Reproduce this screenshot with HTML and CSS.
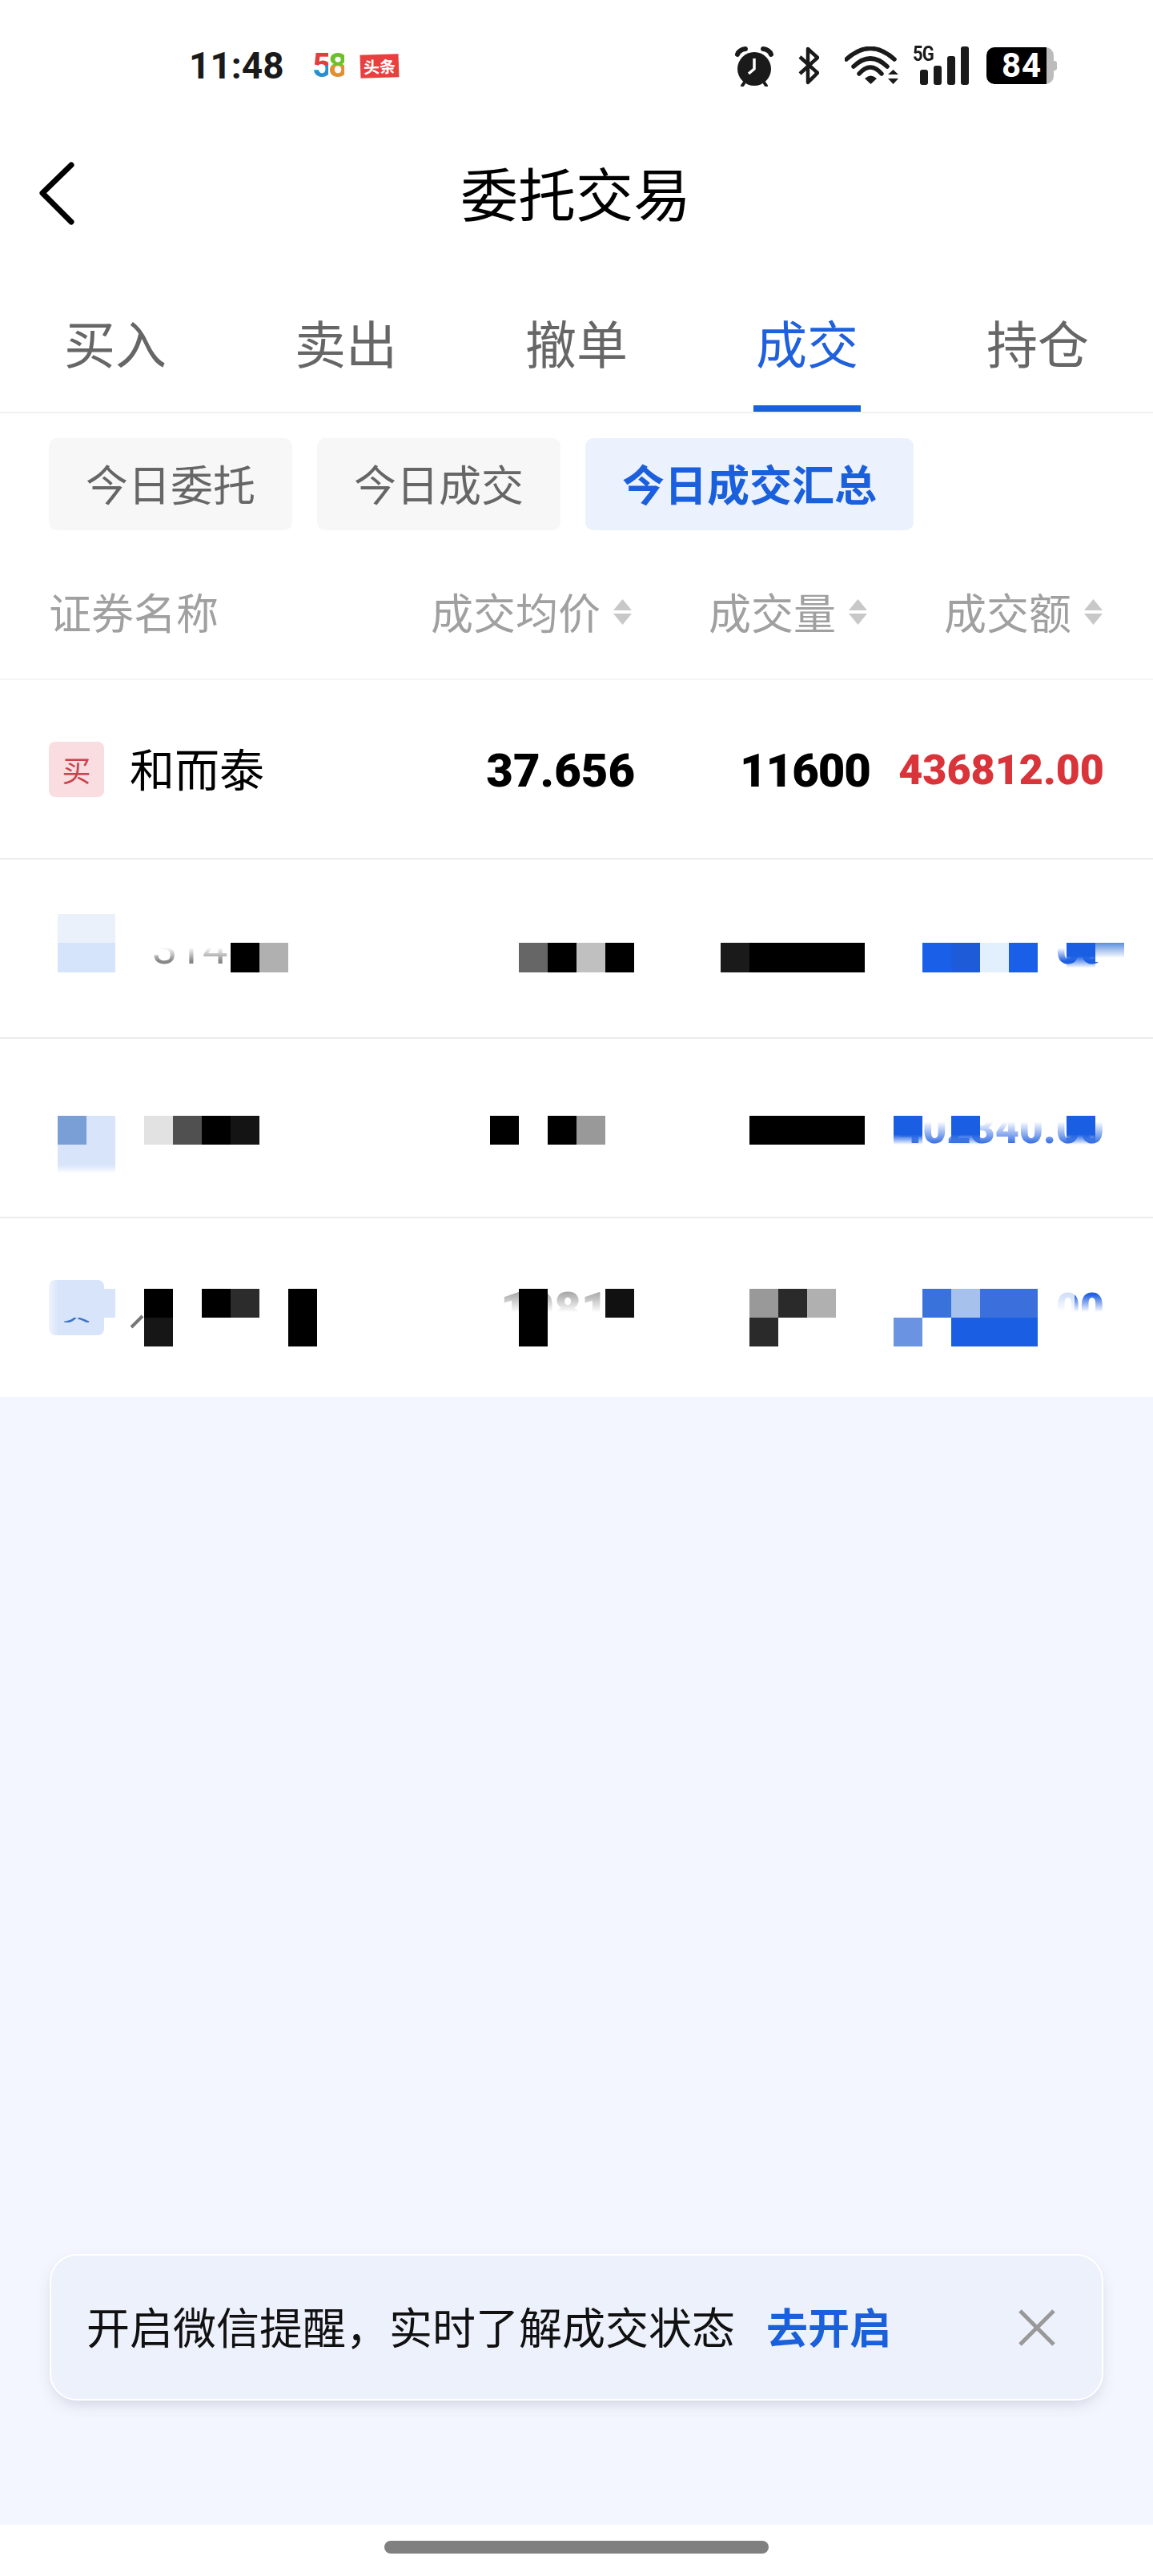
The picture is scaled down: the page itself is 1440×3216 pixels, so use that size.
FILE: index.html
```html
<!DOCTYPE html>
<html lang="zh-CN">
<head>
    <meta charset="UTF-8">
    <meta name="viewport" content="width=device-width, initial-scale=1.0">
    <title>委托交易</title>
    <link rel="stylesheet" href="styles.css">
</head>
<body>
<div class="page">
    <div class="status-bar">
        <div class="status-left">
            <span class="time">11:48</span>
            <span class="logo-58"><span class="five">5</span><span class="eight">8</span></span>
            <span class="logo-news">头条</span>
        </div>
        <div class="status-right">
            <svg class="icon-alarm" width="50" height="52" viewBox="0 0 50 52">
                <circle cx="24" cy="30" r="21" fill="#1a1a1a"/>
                <path d="M3 12Q5 6 13 5M45 12Q43 6 35 5" fill="none" stroke="#1a1a1a" stroke-width="6" stroke-linecap="round"/>
                <path d="M13 45L9 51M35 45L39 51" fill="none" stroke="#1a1a1a" stroke-width="4" stroke-linecap="round"/>
                <path d="M24 17V30L17 36" fill="none" stroke="#fff" stroke-width="3.5"/>
            </svg>
            <svg class="icon-bt" width="26" height="48" viewBox="0 0 26 48">
                <path d="M2 13L24 33L12 45V3L24 14L2 34" fill="none" stroke="#1a1a1a" stroke-width="4.5" stroke-linejoin="round"/>
            </svg>
            <svg class="icon-wifi" width="68" height="48" viewBox="0 0 68 48">
                <path d="M2 16Q32 -11 62 16M11 25Q32 5 53 25M18 34Q32 18 46 34" fill="none" stroke="#1a1a1a" stroke-width="5.5" stroke-linecap="round"/>
                <path d="M25 40Q32.5 33 40 40L32.5 47Z" fill="#1a1a1a"/>
                <path d="M60.5 29L67 35H54ZM54 40H67L60.5 47Z" fill="#1a1a1a"/>
            </svg>
            <div class="signal">
                <span class="signal-type">5G</span>
                <svg width="61" height="48" viewBox="0 0 61 48">
                    <g fill="#1a1a1a">
                        <rect x="0" y="29" width="10" height="19" rx="3"/>
                        <rect x="17" y="24" width="10" height="24" rx="3"/>
                        <rect x="34" y="12" width="10" height="36" rx="3"/>
                        <rect x="51" y="0" width="10" height="48" rx="3"/>
                    </g>
                </svg>
            </div>
            <div class="battery">
                <span class="battery-level">84</span>
                <span class="battery-tip"></span>
            </div>
        </div>
    </div>

    <header class="nav">
        <svg class="back" width="50" height="84" viewBox="0 0 50 84">
            <path d="M42 7L6 42L42 78" fill="none" stroke="#000" stroke-width="7" stroke-linecap="round" stroke-linejoin="round"/>
        </svg>
        <h1>委托交易</h1>
    </header>

    <nav class="tabs">
        <div class="tab">买入</div>
        <div class="tab">卖出</div>
        <div class="tab">撤单</div>
        <div class="tab active">成交</div>
        <div class="tab">持仓</div>
    </nav>

    <div class="filters">
        <div class="filter">今日委托</div>
        <div class="filter">今日成交</div>
        <div class="filter active">今日成交汇总</div>
    </div>

    <div class="table-head">
        <div class="col-name">证券名称</div>
        <div class="col-num">成交均价<svg class="sort" width="23" height="32" viewBox="0 0 23 32"><path d="M11.500 0L23 14H0ZM0 18H23L11.500 32Z" fill="#c8c8c8"/></svg></div>
        <div class="col-num">成交量<svg class="sort" width="23" height="32" viewBox="0 0 23 32"><path d="M11.500 0L23 14H0ZM0 18H23L11.500 32Z" fill="#c8c8c8"/></svg></div>
        <div class="col-num">成交额<svg class="sort" width="23" height="32" viewBox="0 0 23 32"><path d="M11.500 0L23 14H0ZM0 18H23L11.500 32Z" fill="#c8c8c8"/></svg></div>
    </div>

    <div class="row">
        <div class="cell-name"><span class="badge">买</span><span class="stock">和而泰</span></div>
        <div class="num">37.656</div>
        <div class="num tight">11600</div>
        <div class="amount up">436812.00</div>
    </div>

    <!-- rows below are pixelated in the source picture -->
    <div class="row">
        <div class="cell-name"><span class="ghost-code fade-top">3147</span></div>
        <div class="num"></div>
        <div class="num"></div>
        <div class="amount down fade-top">00</div>
        <svg class="mosaic" viewBox="0 0 1440 224">
            <defs>
                <linearGradient id="fadeA" x1="0" y1="0" x2="0" y2="1">
                    <stop offset="0.45" stop-color="#1a5fe3"/>
                    <stop offset="0.85" stop-color="#1a5fe3" stop-opacity="0"/>
                </linearGradient>
                <linearGradient id="fadeB" x1="0" y1="0" x2="0" y2="1">
                    <stop offset="0" stop-color="#5b8fe0"/>
                    <stop offset="0.8" stop-color="#ffffff"/>
                </linearGradient>
            </defs>
            <rect x="72" y="68" width="72" height="36" fill="#eaf1fb"/>
            <rect x="72" y="104" width="72" height="37" fill="#d5e4fb"/>
            <rect x="288" y="104" width="36" height="37" fill="#000"/>
            <rect x="324" y="104" width="36" height="37" fill="#b0b0b0"/>
            <rect x="648" y="104" width="36" height="37" fill="#666"/>
            <rect x="684" y="104" width="36" height="37" fill="#000"/>
            <rect x="720" y="104" width="36" height="37" fill="#c0c0c0"/>
            <rect x="756" y="104" width="36" height="37" fill="#000"/>
            <rect x="900" y="104" width="36" height="37" fill="#1a1a1a"/>
            <rect x="936" y="104" width="144" height="37" fill="#000"/>
            <rect x="1152" y="104" width="36" height="37" fill="#1a5fe8"/>
            <rect x="1188" y="104" width="36" height="37" fill="#1d5bd8"/>
            <rect x="1224" y="104" width="36" height="37" fill="#e2effd"/>
            <rect x="1260" y="104" width="36" height="37" fill="#1a5fe8"/>
            <rect x="1332" y="104" width="36" height="37" fill="url(#fadeA)"/>
            <rect x="1368" y="104" width="36" height="24" fill="url(#fadeB)"/>
        </svg>
    </div>

    <div class="row">
        <div class="cell-name"></div>
        <div class="num"></div>
        <div class="num"></div>
        <div class="amount down fade-top-soft">402340.00</div>
        <svg class="mosaic" viewBox="0 0 1440 224">
            <defs>
                <linearGradient id="fadeC" x1="0" y1="0" x2="0" y2="1">
                    <stop offset="0.7" stop-color="#d8e4fa"/>
                    <stop offset="1" stop-color="#ffffff"/>
                </linearGradient>
                <linearGradient id="fadeD" x1="0" y1="0" x2="0" y2="1">
                    <stop offset="0.65" stop-color="#1a5fe3"/>
                    <stop offset="1" stop-color="#1a5fe3" stop-opacity="0"/>
                </linearGradient>
            </defs>
            <rect x="72" y="96" width="36" height="36" fill="#7a9fd6"/>
            <rect x="108" y="96" width="36" height="36" fill="#d8e4fa"/>
            <rect x="72" y="132" width="72" height="36" fill="url(#fadeC)"/>
            <rect x="180" y="96" width="36" height="36" fill="#e2e2e2"/>
            <rect x="216" y="96" width="36" height="36" fill="#505050"/>
            <rect x="252" y="96" width="36" height="36" fill="#000"/>
            <rect x="288" y="96" width="36" height="36" fill="#141414"/>
            <rect x="612" y="96" width="36" height="36" fill="#000"/>
            <rect x="684" y="96" width="36" height="36" fill="#000"/>
            <rect x="720" y="96" width="36" height="36" fill="#999"/>
            <rect x="936" y="96" width="144" height="36" fill="#000"/>
            <rect x="1116" y="96" width="36" height="36" fill="url(#fadeD)"/>
            <rect x="1188" y="96" width="36" height="36" fill="url(#fadeD)"/>
            <rect x="1332" y="96" width="36" height="36" fill="url(#fadeD)"/>
        </svg>
    </div>

    <div class="row last">
        <div class="cell-name"><span class="badge sell"><span class="fade-top">卖</span></span></div>
        <div class="num ghost-num fade-bottom">10810</div>
        <div class="num"></div>
        <div class="amount down fade-bottom">00</div>
        <svg class="mosaic" viewBox="0 0 1440 224">
            <path d="M164 136L178 122" stroke="#777" stroke-width="4" fill="none"/>
            <rect x="72" y="88" width="72" height="36" fill="#d8e4fa"/>
            <rect x="180" y="88" width="36" height="36" fill="#000"/>
            <rect x="180" y="124" width="36" height="36" fill="#161616"/>
            <rect x="252" y="88" width="36" height="36" fill="#000"/>
            <rect x="288" y="88" width="36" height="36" fill="#2c2c2c"/>
            <rect x="360" y="88" width="36" height="72" fill="#000"/>
            <rect x="648" y="88" width="36" height="72" fill="#000"/>
            <rect x="756" y="88" width="36" height="36" fill="#111"/>
            <rect x="936" y="88" width="36" height="36" fill="#999"/>
            <rect x="972" y="88" width="36" height="36" fill="#2a2a2a"/>
            <rect x="1008" y="88" width="36" height="36" fill="#b0b0b0"/>
            <rect x="936" y="124" width="36" height="36" fill="#2a2a2a"/>
            <rect x="1152" y="88" width="36" height="36" fill="#3a72dc"/>
            <rect x="1188" y="88" width="36" height="36" fill="#a6c2ec"/>
            <rect x="1224" y="88" width="72" height="36" fill="#3a6fdc"/>
            <rect x="1116" y="124" width="36" height="36" fill="#6a94e2"/>
            <rect x="1188" y="124" width="108" height="36" fill="#1a5fe3"/>
            <rect x="1296" y="88" width="46" height="72" fill="#fff" opacity="0.8"/>
        </svg>
    </div>

    <div class="empty">
        <div class="toast">
            <span class="toast-text">开启微信提醒，实时了解成交状态</span>
            <span class="toast-link">去开启</span>
            <svg class="toast-close" width="46" height="46" viewBox="0 0 46 46">
                <path d="M2 2L44 44M44 2L2 44" stroke="#999" stroke-width="5" fill="none"/>
            </svg>
        </div>
    </div>

    <div class="home-area">
        <div class="home-bar"></div>
    </div>
</div>
</body>
</html>
```

FILE: styles.css
```css
body {
    margin: 0;
    padding: 0;
    background-color: #fff;
    font-family: "Noto Sans CJK SC", "Liberation Sans", sans-serif;
    color: #000;
}

.page {
    width: 1440px;
    height: 3216px;
    display: flex;
    flex-direction: column;
    overflow: hidden;
}

/* status bar */
.status-bar {
    height: 164px;
    flex: none;
    display: flex;
    justify-content: space-between;
    align-items: center;
    padding: 0 124px 0 236px;
}

.status-left,
.status-right {
    display: flex;
    align-items: center;
}

.time {
    font-family: Roboto, sans-serif;
    font-weight: 700;
    font-size: 46px;
    line-height: 1;
    color: #1a1a1a;
    width: 154px;
}

.logo-58 {
    font-family: Roboto, sans-serif;
    font-weight: 700;
    font-size: 42px;
    line-height: 1;
    letter-spacing: -4px;
    width: 60px;
}

.logo-58 span {
    -webkit-background-clip: text;
    background-clip: text;
    color: transparent;
}

.logo-58 .five {
    background-image: linear-gradient(#e0403a 50%, #2a8fd0 50%);
}

.logo-58 .eight {
    background-image: linear-gradient(#6cc02a 50%, #e09030 50%);
}

.logo-news {
    width: 48px;
    height: 29px;
    background-color: #e8403f;
    color: #fff;
    font-size: 20px;
    font-weight: 700;
    line-height: 29px;
    text-align: center;
    transform: rotate(-2deg);
}

.icon-alarm {
    margin-right: 29px;
}

.icon-bt {
    margin-right: 32px;
}

.icon-wifi {
    margin-right: 26px;
}

.signal {
    position: relative;
    width: 61px;
    height: 48px;
    margin-right: 22px;
}

.signal svg {
    display: block;
}

.signal-type {
    position: absolute;
    top: -4px;
    left: -9px;
    font-family: Roboto, sans-serif;
    font-weight: 700;
    font-size: 26px;
    line-height: 1;
    letter-spacing: -1px;
    color: #1a1a1a;
    transform: scaleX(0.85);
    transform-origin: left top;
}

.battery {
    position: relative;
    width: 84px;
    height: 46px;
    border-radius: 10px;
    background: linear-gradient(90deg, #000 89%, #bcbcbc 89%);
}

.battery-level {
    display: block;
    padding-left: 19px;
    font-family: Roboto, sans-serif;
    font-weight: 700;
    font-size: 42px;
    line-height: 46px;
    letter-spacing: 1px;
    color: #fff;
}

.battery-tip {
    position: absolute;
    top: 17px;
    right: -4px;
    width: 4px;
    height: 12px;
    border-radius: 0 3px 3px 0;
    background-color: #bcbcbc;
}

/* title */
.nav {
    position: relative;
    height: 150px;
    padding: 0 2px 8px 0;
    flex: none;
    display: flex;
    justify-content: center;
    align-items: center;
}

.nav h1 {
    margin: 0;
    font-size: 72px;
    font-weight: 400;
    line-height: 1;
    color: #000;
}

.back {
    position: absolute;
    left: 47px;
    top: 35px;
}

/* tabs */
.tabs {
    display: grid;
    grid-template-columns: repeat(5, 1fr);
    height: 192px;
    flex: none;
    border-bottom: 2px solid #f0f0f0;
}

.tab {
    position: relative;
    display: flex;
    justify-content: center;
    padding-top: 72px;
    font-size: 64px;
    line-height: 1;
    color: #666;
}

.tab.active {
    color: #1f60dc;
}

.tab.active::after {
    content: "";
    position: absolute;
    left: 77px;
    bottom: 0;
    width: 134px;
    height: 8px;
    background-color: #1a5fdc;
}

/* filter pills */
.filters {
    display: flex;
    gap: 31px;
    padding: 31px 61px 0;
    flex: none;
}

.filter {
    height: 113px;
    padding: 0 46px 2px;
    display: flex;
    align-items: center;
    border-radius: 10px;
    background-color: #f7f7f7;
    font-size: 53px;
    line-height: 1;
    color: #666;
}

.filter.active {
    background-color: #ebf2fd;
    color: #1a5fdc;
    font-weight: 700;
}

/* table */
.table-head,
.row {
    display: grid;
    grid-template-columns: 436px 294px 294px 294px;
    padding: 0 61px;
    flex: none;
}

.table-head {
    height: 167px;
    padding-top: 18px;
    align-items: center;
    border-bottom: 2px solid #f5f5f5;
    font-size: 53px;
    line-height: 1;
    color: #a0a0a0;
}

.col-num {
    display: flex;
    justify-content: flex-end;
    align-items: center;
    gap: 16px;
    padding-right: 2px;
}

.row {
    position: relative;
    height: 222px;
    align-items: center;
    border-bottom: 2px solid #ececec;
}

.row.last {
    height: 223px;
    border-bottom: 0;
}

.cell-name {
    display: flex;
    align-items: center;
    gap: 32px;
}

.badge {
    width: 69px;
    height: 69px;
    border-radius: 8px;
    display: flex;
    justify-content: center;
    align-items: center;
    background-color: #fadde0;
    color: #c9434d;
    font-size: 36px;
    line-height: 1;
}

.badge.sell {
    background: linear-gradient(90deg, #eef4fd, #d8e4fa 18%);
    color: #3f72cc;
}

.stock {
    padding-bottom: 5px;
    font-size: 56px;
    line-height: 1;
}

.num,
.amount {
    font-family: Roboto, sans-serif;
    font-weight: 900;
    text-align: right;
    padding-top: 3px;
}

.num {
    margin-right: -2px;
    font-size: 58px;
    line-height: 1;
}

.num.tight {
    letter-spacing: -1px;
}

.amount {
    font-size: 52px;
    line-height: 1;
}

.amount.up {
    color: #d9343a;
}

.amount.down {
    color: #1f5fe0;
}

.ghost-code {
    padding-left: 129px;
    font-family: Roboto, sans-serif;
    font-size: 56px;
    line-height: 1;
    color: #888;
}

.ghost-num {
    color: #aaa;
}

/* leftovers of the pixelated text */
.fade-top {
    -webkit-mask-image: linear-gradient(transparent 48%, #000 78%);
    mask-image: linear-gradient(transparent 48%, #000 78%);
}

.fade-top-soft {
    -webkit-mask-image: linear-gradient(transparent 35%, #000 90%);
    mask-image: linear-gradient(transparent 35%, #000 90%);
}

.fade-bottom {
    -webkit-mask-image: linear-gradient(#000 20%, transparent 60%);
    mask-image: linear-gradient(#000 20%, transparent 60%);
}

.mosaic {
    position: absolute;
    left: 0;
    top: 0;
    width: 1440px;
    height: 224px;
}

/* lower area */
.empty {
    flex: 1;
    display: flex;
    flex-direction: column;
    justify-content: flex-end;
    padding: 0 62px 155px;
    background-color: #f3f6fe;
}

.toast {
    height: 179px;
    display: flex;
    align-items: center;
    padding: 0 58px 0 44px;
    border: 2px solid #fff;
    border-radius: 34px;
    background-color: #edf1fc;
    box-shadow: 0 8px 22px -8px rgba(60, 70, 100, 0.28);
    font-size: 54px;
    line-height: 1;
}

.toast-text {
    padding-bottom: 3px;
    color: #111;
}

.toast-link {
    margin-left: 39px;
    padding-bottom: 3px;
    font-size: 52px;
    color: #1a5fdc;
    font-weight: 700;
}

.toast-close {
    margin-left: auto;
}

.home-area {
    height: 64px;
    flex: none;
    display: flex;
    justify-content: center;
    padding-top: 20px;
    box-sizing: border-box;
    background-color: #fff;
}

.home-bar {
    width: 480px;
    height: 16px;
    border-radius: 8px;
    background-color: #808080;
}
```
